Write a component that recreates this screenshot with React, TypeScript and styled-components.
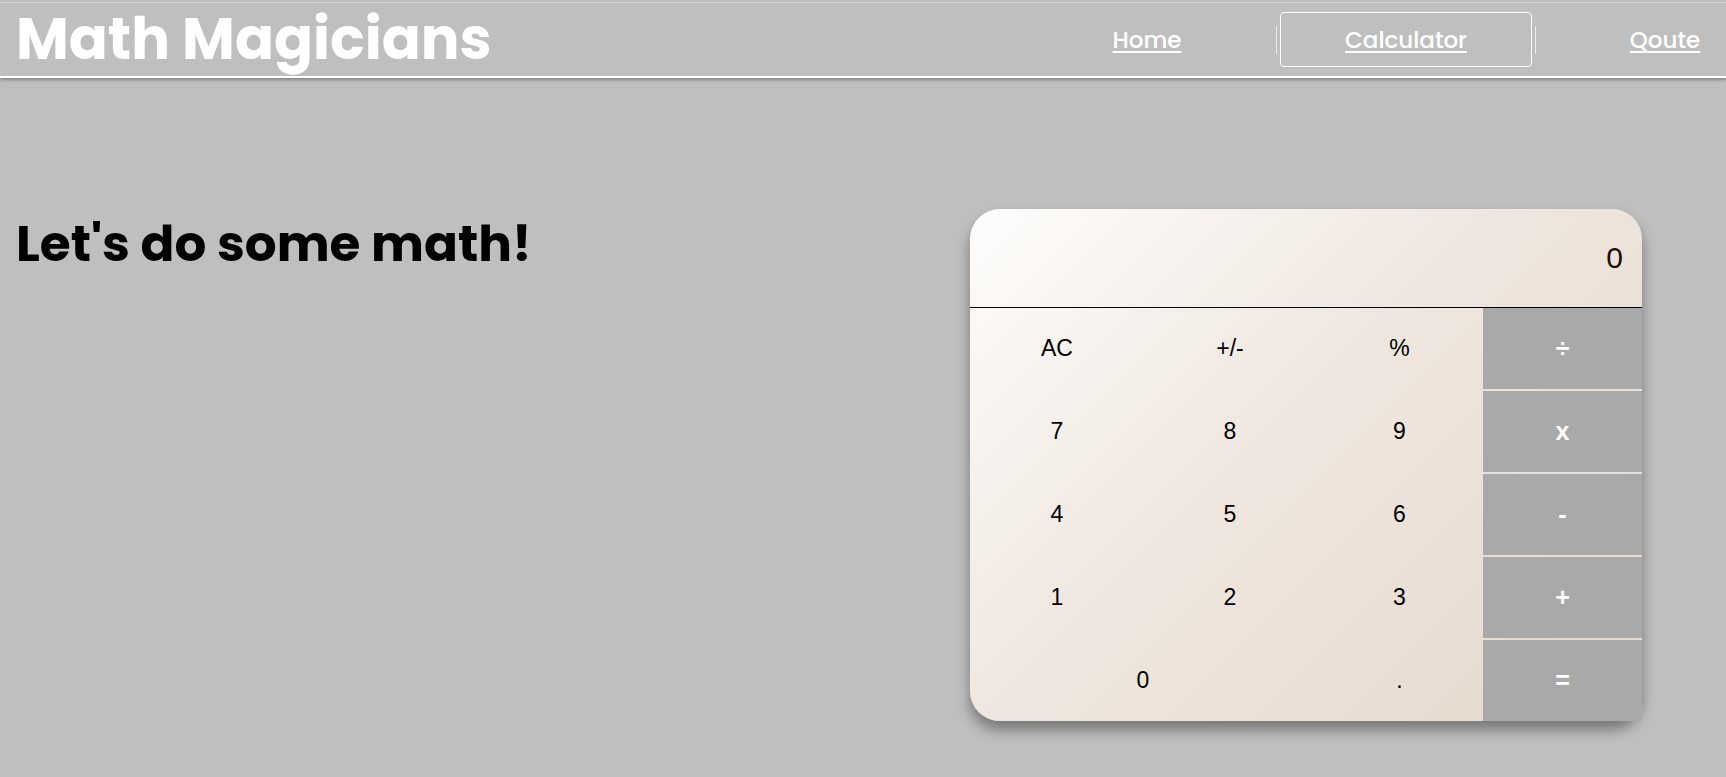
import React from "react";
import styled, {createGlobalStyle} from "styled-components";

const GlobalStyle = createGlobalStyle`
  html, body {
    margin: 0;
    padding: 0;
    background: #bfbfbf;
    font-family: "Poppins", "Inter", "Liberation Sans", sans-serif;
    overflow-x: hidden;
  }
`;

const Page = styled.div`
  min-height: 777px;
  background: #bfbfbf;
  padding-top: 2px;
  overflow: hidden;
`;

const Header = styled.header`
  height: 73px;
  border-top: 1px solid #d9d9d9;
  border-bottom: 2px solid #ffffff;
  box-shadow: 0px 2px 3px rgba(0, 0, 0, 0.3);
  display: flex;
  align-items: center;
  justify-content: space-between;
  padding: 0 0 0 16px;
`;

const Title = styled.h1`
  margin: 0;
  font-family: "Poppins", "Inter", sans-serif;
  font-weight: 700;
  font-size: 57.5px;
  line-height: 73px;
  color: #ffffff;
  white-space: nowrap;
`;

const Nav = styled.nav`
  display: flex;
  align-items: center;
  height: 100%;
  flex-shrink: 0;
  margin-right: -68px;
`;

const Divider = styled.span`
  width: 1px;
  height: 28px;
  background: #ededed;
`;

const NavItem = styled.a<{ active?: boolean }>`
  width: ${(p) => (p.active ? "252px" : "258px")};
  height: 55px;
  margin: ${(p) => (p.active ? "0 3px" : "0")};
  box-sizing: border-box;
  display: flex;
  align-items: center;
  justify-content: center;
  border: ${(p) => (p.active ? "1px solid #ffffff" : "1px solid transparent")};
  border-radius: 4px;
  font-family: "Poppins", "Inter", sans-serif;
  font-size: 23px;
  font-weight: 500;
  color: #ffffff;
  text-decoration: underline;
  text-underline-offset: 3px;
  cursor: pointer;
`;

const Main = styled.main`
  display: flex;
  justify-content: space-between;
  align-items: flex-start;
  padding: 131px 84px 0 16px;
`;

const Heading = styled.h2`
  margin: 0;
  font-family: "Poppins", "Inter", sans-serif;
  font-weight: 700;
  font-size: 50px;
  line-height: 70px;
  color: #000000;
`;

const Calculator = styled.div`
  width: 672px;
  border-radius: 30px;
  background: linear-gradient(135deg, #fefdfb 0%, #efe6df 45%, #e5d8cb 100%);
  box-shadow: 0px 9px 14px rgba(0, 0, 0, 0.38);
`;

const Display = styled.div`
  height: 98px;
  border-bottom: 1px solid #000000;
  display: flex;
  align-items: center;
  justify-content: flex-end;
  padding-right: 19px;
  font-family: "Liberation Sans", Arial, sans-serif;
  font-size: 30px;
  color: #1e0f05;
`;

const Keys = styled.div`
  display: grid;
  grid-template-columns: 174fr 172fr 167fr 159fr;
  grid-auto-rows: 81px;
  row-gap: 2px;
`;

const Key = styled.button<{ op?: boolean; wide?: boolean }>`
  grid-column: ${(p) => (p.wide ? "span 2" : "auto")};
  border: none;
  margin: 0;
  padding: 0;
  background: ${(p) => (p.op ? "#a9a9a9" : "transparent")};
  font-family: "Liberation Sans", Arial, sans-serif;
  font-size: ${(p) => (p.op ? "25px" : "23px")};
  font-weight: ${(p) => (p.op ? 700 : 400)};
  color: ${(p) => (p.op ? "#ffffff" : "#000000")};
  cursor: pointer;
`;

const rows = [
  ["AC", "+/-", "%", "÷"],
  ["7", "8", "9", "x"],
  ["4", "5", "6", "-"],
  ["1", "2", "3", "+"],
];

export default function App() {
  return (
    <>
      <GlobalStyle />
      <Page>
        <Header>
          <Title>Math Magicians</Title>
          <Nav>
            <NavItem>Home</NavItem>
            <Divider />
            <NavItem active>Calculator</NavItem>
            <Divider />
            <NavItem>Qoute</NavItem>
          </Nav>
        </Header>
        <Main>
          <Heading>Let's do some math!</Heading>
          <Calculator>
            <Display>0</Display>
            <Keys>
              {rows.map((row) =>
                row.map((k, i) => (
                  <Key key={k} op={i === 3}>
                    {k}
                  </Key>
                ))
              )}
              <Key wide>0</Key>
              <Key>.</Key>
              <Key op>=</Key>
            </Keys>
          </Calculator>
        </Main>
      </Page>
    </>
  );
}
